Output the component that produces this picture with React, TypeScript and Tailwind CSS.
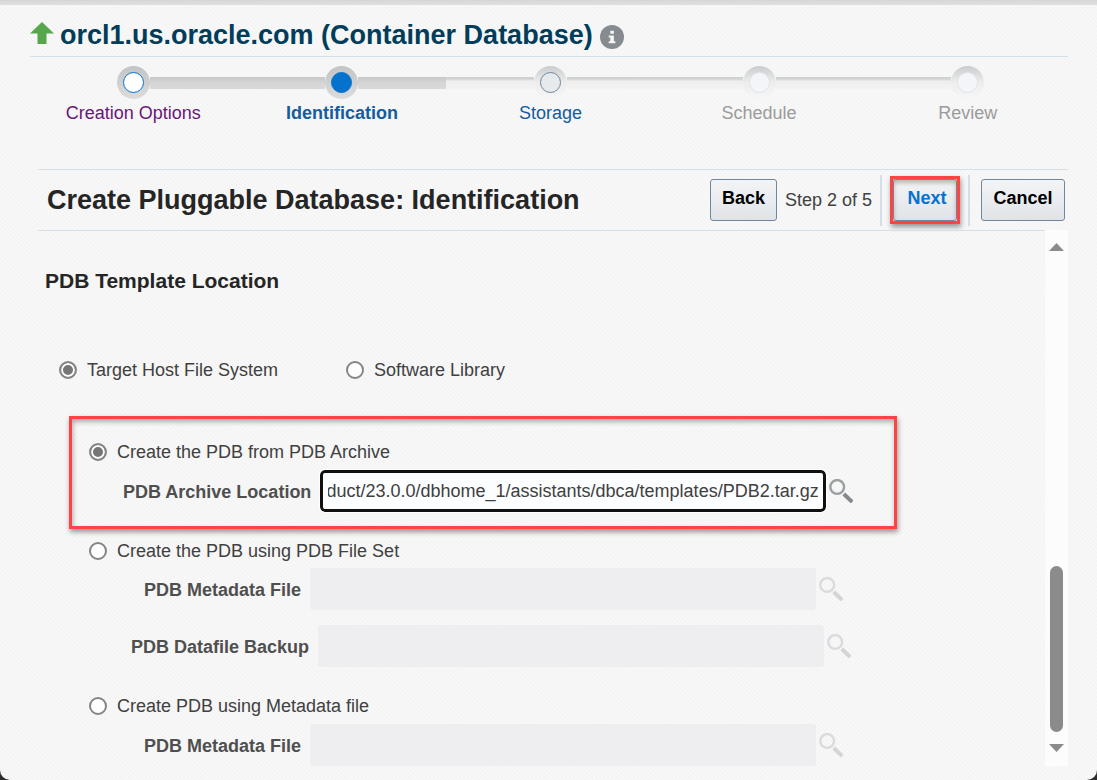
import { useEffect, useRef, useState } from "react";

type StepState = "visited" | "current" | "next" | "disabled";

const steps: { label: string; state: StepState }[] = [
  { label: "Creation Options", state: "visited" },
  { label: "Identification", state: "current" },
  { label: "Storage", state: "next" },
  { label: "Schedule", state: "disabled" },
  { label: "Review", state: "disabled" },
];

const ringStyles: Record<StepState, string> = {
  visited: "bg-linear-to-b from-[#c2c4c5] to-[#dcdcdc]",
  current: "bg-linear-to-b from-[#c2c4c5] to-[#dcdcdc]",
  next: "bg-linear-to-b from-[#c9cccd] via-[#ededed] to-[#f6f6f6]",
  disabled: "bg-linear-to-b from-[#c9cccd] via-[#ededed] to-[#f6f6f6]",
};

const dotStyles: Record<StepState, string> = {
  visited: "border-[#0572ce] bg-white",
  current: "border-[#0572ce] bg-[#0572ce]",
  next: "border-[#71879b] bg-[#e7eaed]",
  disabled: "border-[#dfe4e7] bg-[#f4f5f8]",
};

const labelStyles: Record<StepState, string> = {
  visited: "text-[#6b1578]",
  current: "font-bold text-[#145c9e]",
  next: "text-[#145c9e]",
  disabled: "text-[#9b9b9b]",
};

const filledTrack = "h-3 flex-1 bg-linear-to-b from-[#c6c8c8] via-[#d6d6d6] to-[#d9d9d9]";
const openTrack = "h-3 flex-1 bg-linear-to-b from-[#d0d2d2] from-15% via-[#efefef] via-35% to-[#f3f3f3]";

function Stepper() {
  return (
    <nav aria-label="Progress" className="pt-[9px] pr-[25px] pl-[29px]">
      <ol className="grid grid-cols-5">
        {steps.map((step, i) => (
          <li key={step.label} className="flex flex-col items-center">
            <div className="flex w-full items-center">
              <span className={i === 0 ? "h-3 flex-1" : i <= 1 ? filledTrack : openTrack} />
              <span className={`flex size-[33px] items-center justify-center rounded-full ${ringStyles[step.state]}`}>
                <span className={`size-[21px] rounded-full border ${dotStyles[step.state]}`} />
              </span>
              <span className={i === 4 ? "h-3 flex-1" : i <= 1 ? filledTrack : openTrack} />
            </div>
            {step.state === "disabled" ? (
              <span className={`mt-1 leading-5 ${labelStyles[step.state]}`}>{step.label}</span>
            ) : (
              <a href="#" className={`mt-1 leading-5 ${labelStyles[step.state]}`}>
                {step.label}
              </a>
            )}
          </li>
        ))}
      </ol>
    </nav>
  );
}

const actionButton =
  "h-[42px] rounded-[3px] border border-[#71879b] bg-linear-to-b from-[#f2f4f6] to-[#e1e4e7] pb-1 font-bold";

function SearchButton({ label, disabled }: { label: string; disabled?: boolean }) {
  return (
    <button type="button" aria-label={label} disabled={disabled} className={disabled ? "opacity-30" : ""}>
      <svg viewBox="0 0 24 24" className="size-6" fill="none">
        <circle cx="8.2" cy="8" r="6.9" stroke="#9b9fa1" strokeWidth="2.4" />
        <path d="M14.8 15 L23.2 23" stroke="#848a8d" strokeWidth="4" />
      </svg>
    </button>
  );
}

function Radio(props: { name: string; value: string; label: string; selected: string; onSelect: (v: string) => void }) {
  return (
    <label className="flex items-center gap-[10px] leading-6">
      <input
        type="radio"
        name={props.name}
        value={props.value}
        checked={props.selected === props.value}
        onChange={() => props.onSelect(props.value)}
        className="size-[18px] appearance-none rounded-full border-2 border-[#858585] bg-white checked:bg-[#767676] checked:shadow-[inset_0_0_0_2px_white]"
      />
      {props.label}
    </label>
  );
}

function DisabledField({ id, label }: { id: string; label: string }) {
  return (
    <div className="flex items-center">
      <label htmlFor={id} className="pt-[2px] pr-[9px] font-bold text-[#4f4f4f]">
        {label}
      </label>
      <input id={id} type="text" disabled className="mr-[3px] h-[42px] w-[506px] rounded-[3px] bg-[#eeeef0] px-2" />
      <SearchButton label={`Search ${label}`} disabled />
    </div>
  );
}

const highlight =
  "border-[3px] border-[#ff4343] shadow-[1px_3px_5px_rgba(0,0,0,0.4),inset_1px_3px_5px_rgba(0,0,0,0.3)]";

export default function App() {
  const [location, setLocation] = useState("host");
  const [source, setSource] = useState("archive");
  const [archive, setArchive] = useState("product/23.0.0/dbhome_1/assistants/dbca/templates/PDB2.tar.gz");
  const archiveRef = useRef<HTMLInputElement>(null);

  useEffect(() => {
    const el = archiveRef.current;
    if (el) el.scrollLeft = el.scrollWidth;
  }, []);

  return (
    <div className="bg-[#2d2d2d]">
      <div className="flex min-h-screen flex-col rounded-b-[10px] bg-[repeating-linear-gradient(45deg,#f3f3f3_0px,#f9f9f9_1.5px,#f3f3f3_3px)] pb-[14px] font-['Liberation_Sans',Arial,sans-serif] text-[18px] text-[#404040]">
        <div className="h-[5px] bg-linear-to-b from-[#d6d6d6] to-[#e0e0e0]" />

        <header className="mr-[29px] ml-[30px] flex h-[52px] items-center border-b border-[#d6dfe6]">
          <svg viewBox="0 0 24 22" className="mt-1 h-[22px] w-6" role="img" aria-label="Up">
            <path d="M12 0 L24 11.5 H16.5 V22 H7.5 V11.5 H0 Z" fill="#56a64b" />
          </svg>
          <h1 className="mt-2 ml-[6px] text-[27px] leading-8 font-bold text-[#003d5b]">
            orcl1.us.oracle.com (Container Database)
          </h1>
          <button type="button" aria-label="Information" className="mt-3 ml-[7px]">
            <svg viewBox="0 0 24 24" className="size-6">
              <circle cx="12" cy="12" r="12" fill="#868b8f" />
              <path d="M10.3 5.8h3.6v3h-3.6z M8.7 10.5h5.2v5.8h1.5v2H8.7v-2h1.6v-3.8H8.7z" fill="#f4f4f4" />
            </svg>
          </button>
        </header>

        <Stepper />

        <div className="mt-[46px] mr-[29px] ml-[38px] flex h-[61px] items-center border-t border-[#d6dfe6]">
          <h2 className="flex-1 pl-[9px] text-[27px] leading-8 font-bold text-[#252525]">
            Create Pluggable Database: Identification
          </h2>
          <button type="button" className={`w-[67px] text-black ${actionButton}`}>
            Back
          </button>
          <span className="px-2">Step 2 of 5</span>
          <span className="h-[51px] w-[2px] bg-[#d3dfe8]" />
          <div className={`mx-2 ${highlight}`}>
            <button
              type="button"
              className={`block w-[64px] pl-1 text-[#0572ce] shadow-[inset_0_3px_4px_rgba(0,0,0,0.25)] ${actionButton}`}
            >
              Next
            </button>
          </div>
          <span className="h-[51px] w-[2px] bg-[#d3dfe8]" />
          <button type="button" className={`mr-[3px] ml-[11px] w-[84px] text-black ${actionButton}`}>
            Cancel
          </button>
        </div>

        <div className="mr-[29px] ml-[38px] flex flex-1">
          <main className="flex-1 border-t border-[#d6dfe6]">
            <h3 className="pt-[38px] pl-[7px] text-[21px] leading-6 font-bold text-[#252525]">PDB Template Location</h3>

            <div className="flex gap-[68px] pt-[65px] pl-[21px]">
              <Radio name="location" value="host" label="Target Host File System" selected={location} onSelect={setLocation} />
              <Radio name="location" value="library" label="Software Library" selected={location} onSelect={setLocation} />
            </div>

            <div className={`mt-[34px] ml-[31px] w-[828px] pt-[21px] pb-[14px] pl-[17px] ${highlight}`}>
              <Radio name="source" value="archive" label="Create the PDB from PDB Archive" selected={source} onSelect={setSource} />
              <div className="mt-[6px] flex items-center pl-[34px]">
                <label htmlFor="archive" className="pt-[2px] pr-[9px] font-bold text-[#4f4f4f]">
                  PDB Archive Location
                </label>
                <input
                  id="archive"
                  ref={archiveRef}
                  type="text"
                  value={archive}
                  onChange={(e) => setArchive(e.target.value)}
                  className="mr-[3px] h-[42px] w-[506px] rounded-[5px] border-[3px] border-[#101010] bg-[#fcfdfe] px-[5px] outline outline-white"
                />
                <SearchButton label="Search PDB Archive Location" />
              </div>
            </div>

            <div className="pt-[10px] pl-[51px]">
              <Radio name="source" value="fileset" label="Create the PDB using PDB File Set" selected={source} onSelect={setSource} />
              <div className="mt-[5px] pl-[55px]">
                <DisabledField id="metadata" label="PDB Metadata File" />
              </div>
              <div className="mt-[15px] pl-[42px]">
                <DisabledField id="datafile" label="PDB Datafile Backup" />
              </div>
              <div className="mt-[27px]">
                <Radio name="source" value="metadata" label="Create PDB using Metadata file" selected={source} onSelect={setSource} />
              </div>
              <div className="mt-[6px] pl-[55px]">
                <DisabledField id="metadata-only" label="PDB Metadata File" />
              </div>
            </div>
          </main>

          <div className="flex w-[23px] flex-col items-center bg-[#fcfcfc] pt-[13px] pb-[14px]">
            <svg viewBox="0 0 15 8" className="h-2 w-[15px]">
              <path d="M7.5 0 L15 8 H0 Z" fill="#8b8b8b" />
            </svg>
            <div className="flex w-[13px] flex-1 flex-col justify-end pt-3 pb-3">
              <div className="h-[166px] rounded-full bg-[#8b8b8b]" />
            </div>
            <svg viewBox="0 0 15 8" className="h-2 w-[15px]">
              <path d="M0 0 H15 L7.5 8 Z" fill="#8b8b8b" />
            </svg>
          </div>
        </div>
      </div>
    </div>
  );
}
